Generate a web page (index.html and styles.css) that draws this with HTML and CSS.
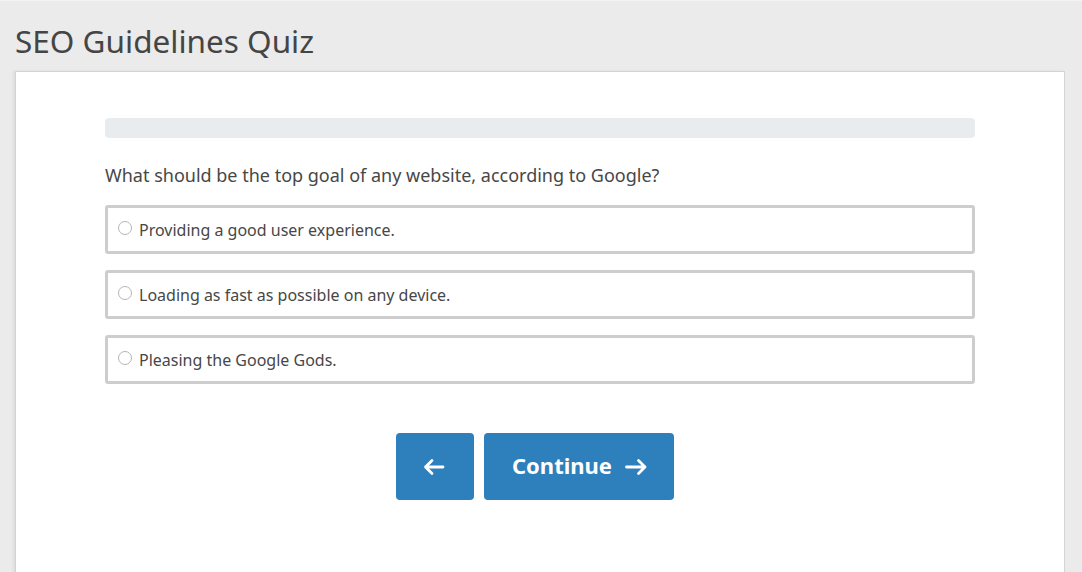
FILE: index.html
```html
<!DOCTYPE html>
<html>
<head>
<meta charset="utf-8">
<link rel="stylesheet" href="styles.css">
</head>
<body>
<header class="page-header">
  <h1 class="page-title">SEO Guidelines Quiz</h1>
</header>
<main class="card">
  <div class="quiz">
    <div class="progress"><div class="progress-fill" style="width:0%"></div></div>
    <p class="question">What should be the top goal of any website, according to Google?</p>
    <div class="options">
      <label class="option"><span class="radio"></span><span class="option-text">Providing a good user experience.</span></label>
      <label class="option"><span class="radio"></span><span class="option-text">Loading as fast as possible on any device.</span></label>
      <label class="option"><span class="radio"></span><span class="option-text">Pleasing the Google Gods.</span></label>
    </div>
    <div class="actions">
      <button class="btn btn-back" aria-label="Back">
        <svg class="arrow" width="22" height="18" viewBox="0 0 22 18"><path d="M9 2.5 L2.5 9 L9 15.5 M2.5 9 H20" fill="none" stroke="#fff" stroke-width="2.8" stroke-linecap="round" stroke-linejoin="round"/></svg>
      </button>
      <button class="btn btn-continue"><span class="btn-label">Continue</span>
        <svg class="arrow" width="24" height="18" viewBox="0 0 24 18"><path d="M14.5 2.5 L21 9 L14.5 15.5 M21 9 H2.5" fill="none" stroke="#fff" stroke-width="2.8" stroke-linecap="round" stroke-linejoin="round"/></svg>
      </button>
    </div>
  </div>
</main>
</body>
</html>
```
FILE: styles.css
```css
html, body {
  margin: 0;
  padding: 0;
}
body {
  background: #ebebeb;
  font-family: "Noto Sans", "Open Sans", sans-serif;
  color: #444;
  height: 572px;
  overflow: hidden;
  border-top: 1px solid #f3f3f3;
  box-sizing: border-box;
}
.page-header {
  padding: 0 15px;
  height: 70px;
  display: flex;
  align-items: center;
}
.page-title {
  margin: 0;
  font-weight: 400;
  font-size: 31.5px;
  color: #454545;
  padding-top: 8px;
}
.card {
  margin: 0 17px 0 15px;
  background: #fff;
  border: 1px solid #d4d4d4;
  box-shadow: -2px 0 3px rgba(0,0,0,0.06);
  height: 520px;
  box-sizing: border-box;
  padding: 46px 0 0;
}
.quiz {
  width: 870px;
  margin: 0 auto;
}
.progress {
  height: 20px;
  background: #e9ecef;
  border-radius: 4px;
  overflow: hidden;
}
.progress-fill {
  height: 100%;
  background: #2d80bb;
}
.question {
  margin: 24px 0 0;
  font-size: 18px;
  line-height: 27px;
  color: #474747;
}
.options {
  margin-top: 16px;
  display: flex;
  flex-direction: column;
  gap: 16px;
}
.option {
  display: flex;
  align-items: center;
  height: 49px;
  box-sizing: border-box;
  border: 3px solid #cdcdcd;
  border-radius: 3px;
  padding: 0 0 0 10px;
  background: #fff;
}
.radio {
  width: 12px;
  height: 12px;
  border: 1px solid #b5b5b5;
  border-radius: 50%;
  margin-right: 7px;
  margin-top: -3px;
  flex: none;
}
.option-text {
  font-size: 16px;
  color: #474747;
}
.actions {
  display: flex;
  justify-content: center;
  gap: 10px;
  margin-top: 49px;
  padding-right: 10px;
}
.btn {
  background: #2d80bb;
  color: #fff;
  border: none;
  border-radius: 4px;
  height: 67px;
  font-family: "Noto Sans", "Open Sans", sans-serif;
  font-weight: 700;
  font-size: 22px;
  display: flex;
  align-items: center;
  justify-content: center;
  padding: 0;
  cursor: pointer;
}
.btn-back {
  width: 78px;
}
.btn-back .arrow {
  margin-left: -2px;
}
.btn-continue {
  width: 190px;
  gap: 12px;
  padding-left: 2px;
}
.btn-label {
  position: relative;
  top: -2px;
}
.arrow {
  display: block;
}
```
